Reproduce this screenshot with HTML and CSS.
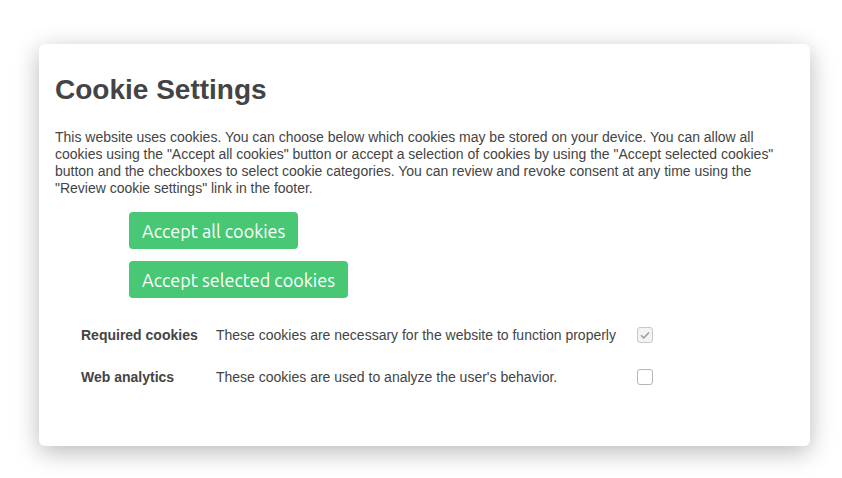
FILE: index.html
```html
<!DOCTYPE html>
<html>
<head>
<meta charset="utf-8">
<link rel="stylesheet" href="styles.css">
</head>
<body>
<div class="card">
  <h1 class="title">Cookie Settings</h1>
  <p class="intro">This website uses cookies. You can choose below which cookies may be stored on your device. You can allow all cookies using the "Accept all cookies" button or accept a selection of cookies by using the "Accept selected cookies" button and the checkboxes to select cookie categories. You can review and revoke consent at any time using the "Review cookie settings" link in the footer.</p>
  <div class="buttons">
    <button class="btn">Accept all cookies</button>
    <button class="btn">Accept selected cookies</button>
  </div>
  <div class="cats">
    <div class="cat-name">Required cookies</div>
    <div class="cat-desc">These cookies are necessary for the website to function properly</div>
    <div class="cat-check"><span class="box checked"><svg viewBox="0 0 16 16" width="16" height="16"><path d="M4 8.2 L6.8 11 L12 5.5" fill="none" stroke="#9a9a9a" stroke-width="1.5"/></svg></span></div>
    <div class="cat-name">Web analytics</div>
    <div class="cat-desc">These cookies are used to analyze the user's behavior.</div>
    <div class="cat-check"><span class="box"></span></div>
  </div>
</div>
</body>
</html>
```
FILE: styles.css
```css
html, body {
  margin: 0;
  padding: 0;
  background: #ffffff;
}
body {
  padding: 44px 32px 32px 39px;
  font-family: "Liberation Sans", Arial, sans-serif;
  color: #444444;
}
.card {
  width: 739px;
  height: 370px;
  padding: 16px;
  background: #fff;
  border-radius: 6px;
  box-shadow: 0 6px 24px rgba(0,0,0,0.28);
}
.title {
  margin: 0;
  padding-top: 14px;
  font-size: 28px;
  line-height: 32px;
  font-weight: bold;
  color: #444;
}
.intro {
  margin: 23px 0 0 0;
  font-size: 14px;
  line-height: 17px;
  letter-spacing: -0.01px;
}
.buttons {
  display: flex;
  flex-direction: column;
  align-items: flex-start;
  gap: 12px;
  margin: 15px 0 0 74px;
}
.btn {
  font-family: "Ubuntu", "Open Sans", "Noto Sans", sans-serif;
  font-size: 18px;
  color: #fff;
  background: #48c774;
  border: none;
  border-radius: 4px;
  height: 37px;
  padding: 0 13px;
  cursor: pointer;
}
.cats {
  display: grid;
  grid-template-columns: 135px 421px 20px;
  margin: 16px 0 0 26px;
  font-size: 14px;
  align-items: center;
}
.cat-name {
  font-weight: bold;
  height: 42px;
  display: flex;
  align-items: center;
}
.cat-desc {
  height: 42px;
  display: flex;
  align-items: center;
}
.cat-check {
  height: 42px;
  display: flex;
  align-items: center;
}
.box {
  display: block;
  box-sizing: border-box;
  width: 16px;
  height: 16px;
  border: 1px solid #b5b5b5;
  border-radius: 3px;
  background: #fff;
  position: relative;
}
.box.checked {
  border-color: #c8c8c8;
  background: #f3f3f3;
}
.box svg {
  position: absolute;
  left: -1px;
  top: -1px;
}
```
